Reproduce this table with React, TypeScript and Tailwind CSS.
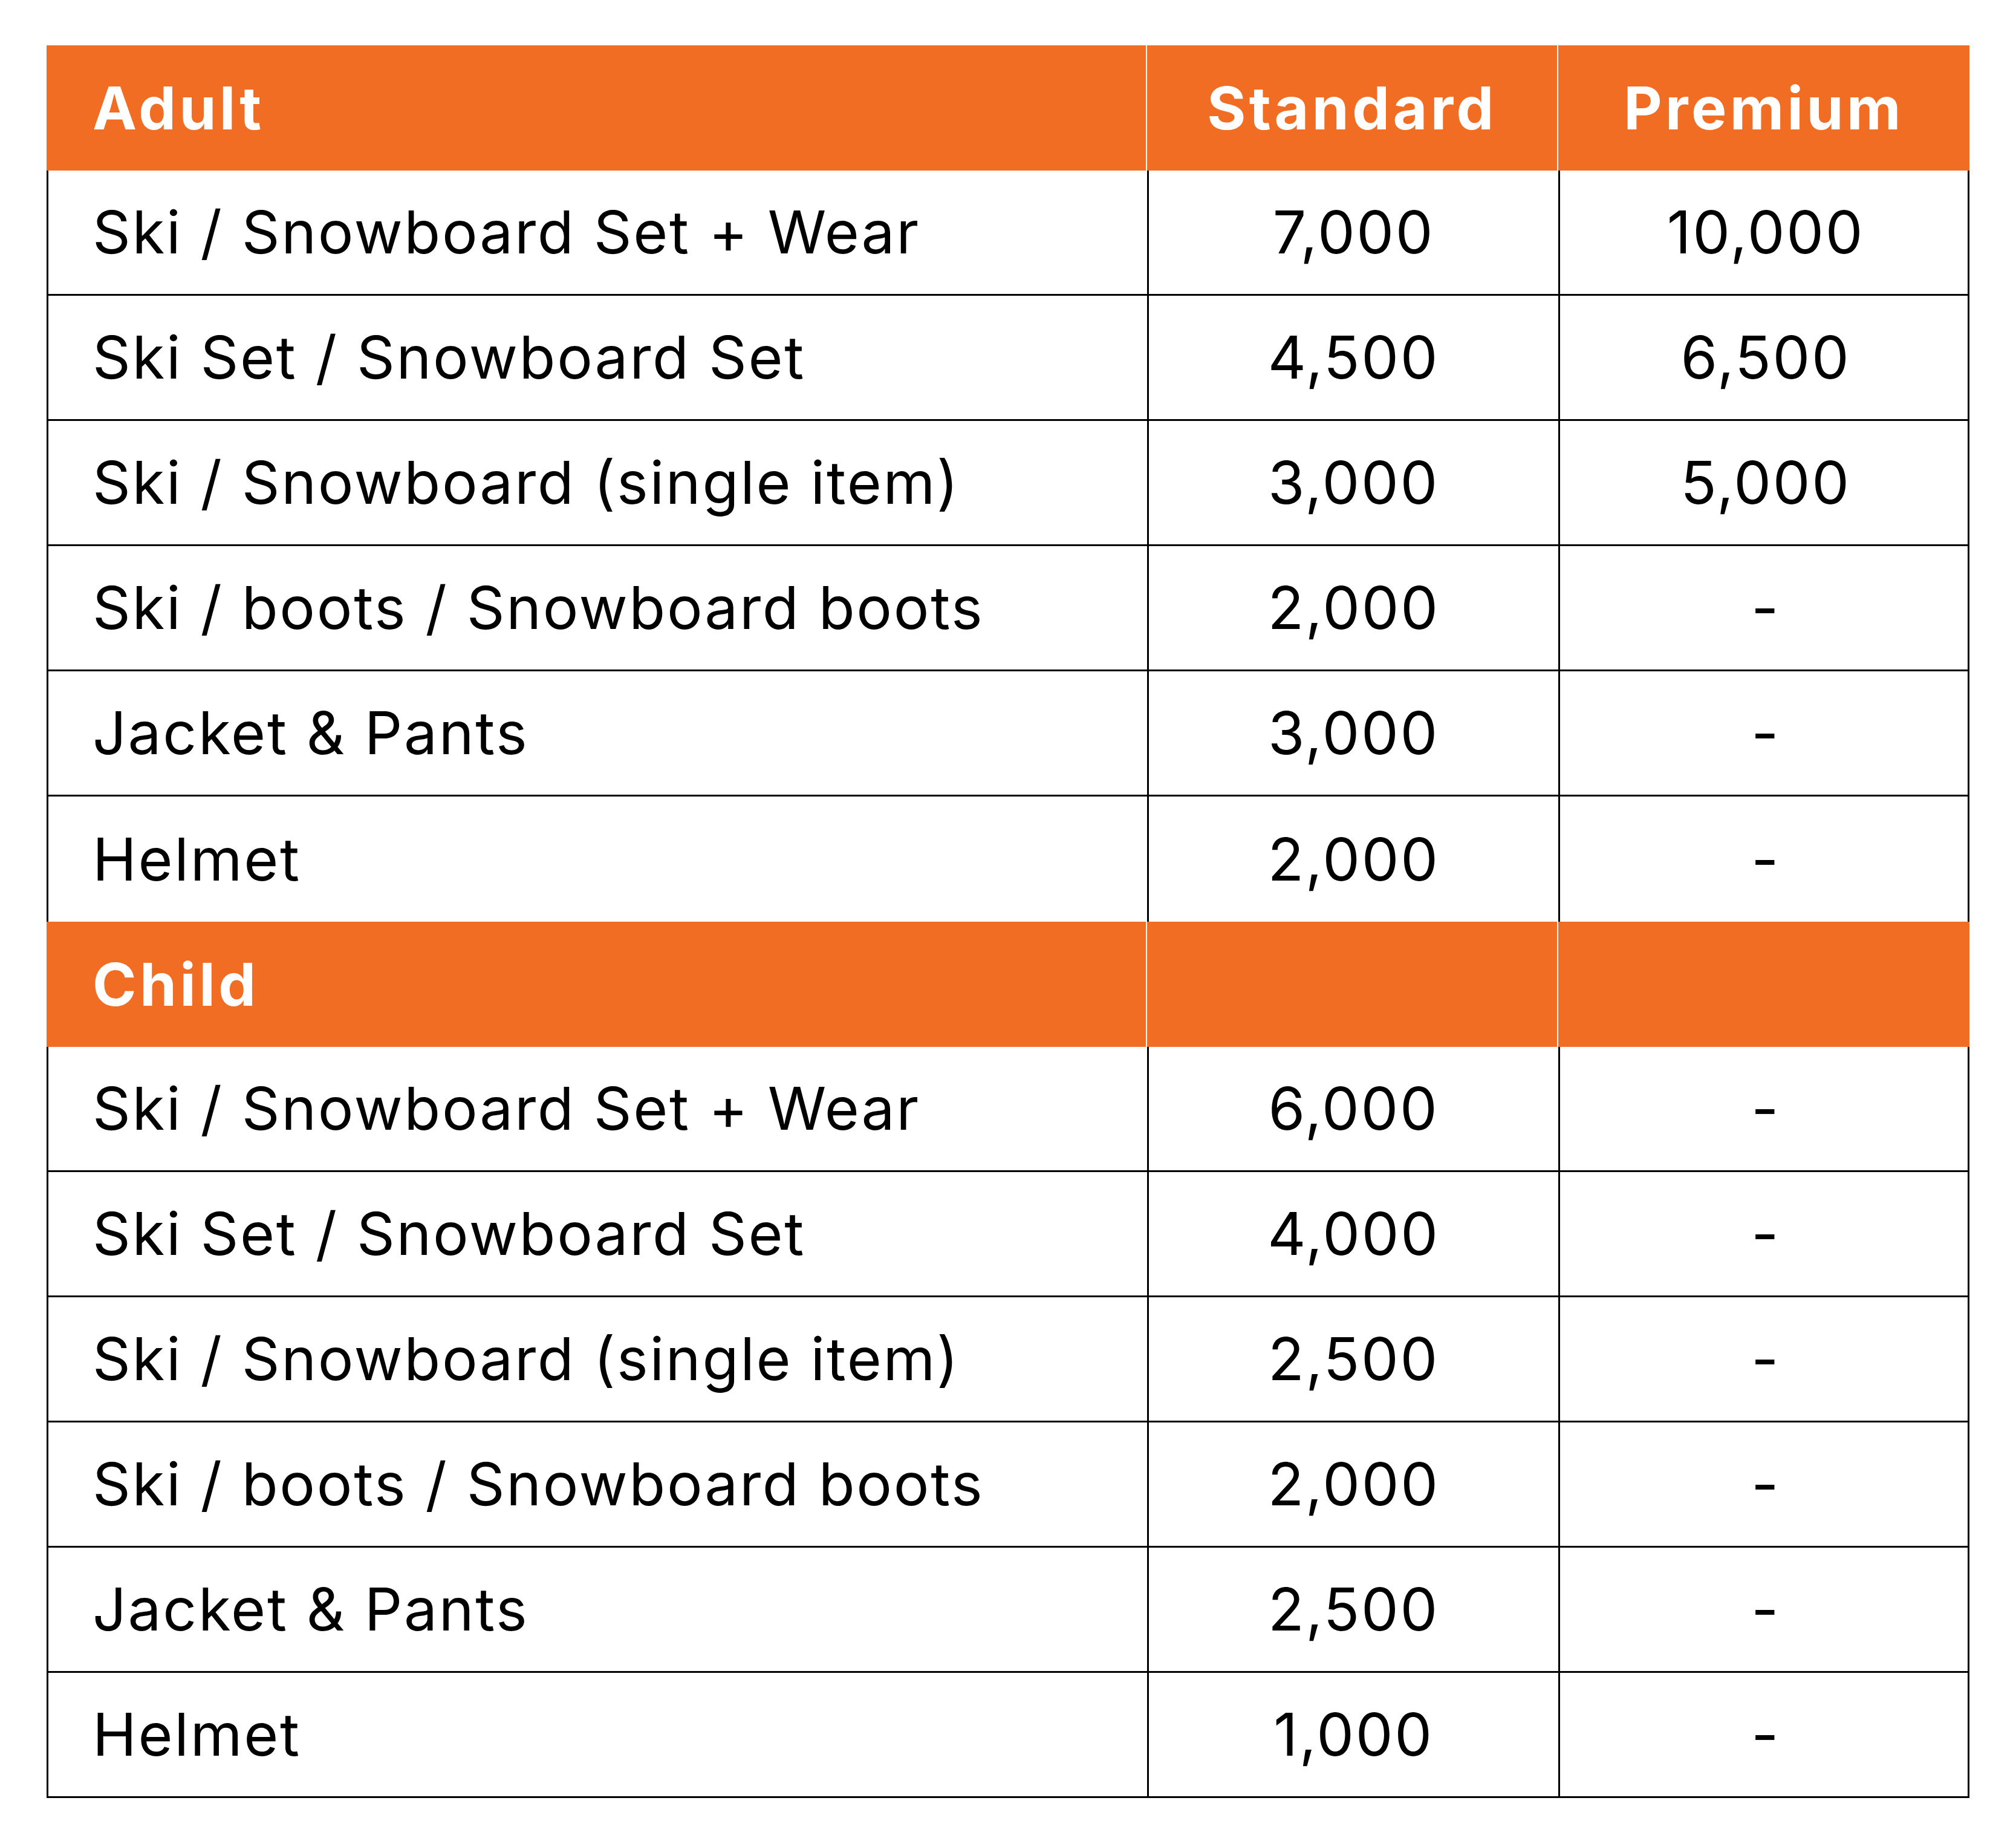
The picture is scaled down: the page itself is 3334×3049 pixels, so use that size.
const adult = [
  ["Ski / Snowboard Set + Wear", "7,000", "10,000"],
  ["Ski Set / Snowboard Set", "4,500", "6,500"],
  ["Ski / Snowboard (single item)", "3,000", "5,000"],
  ["Ski / boots / Snowboard boots", "2,000", "-"],
  ["Jacket & Pants", "3,000", "-"],
  ["Helmet", "2,000", "-"],
];

const child = [
  ["Ski / Snowboard Set + Wear", "6,000", "-"],
  ["Ski Set / Snowboard Set", "4,000", "-"],
  ["Ski / Snowboard (single item)", "2,500", "-"],
  ["Ski / boots / Snowboard boots", "2,000", "-"],
  ["Jacket & Pants", "2,500", "-"],
  ["Helmet", "1,000", "-"],
];

function HeadRow({ label, cols }: { label: string; cols: [string, string] }) {
  return (
    <div className="grid grid-cols-[1820px_680px_680px] h-[207px] bg-[#f06d23] text-white font-bold tracking-[0.055em]">
      <div className="flex items-center pl-[76px] border-r-2 border-white">{label}</div>
      <div className="flex items-center justify-center border-r-2 border-white">{cols[0]}</div>
      <div className="flex items-center justify-center">{cols[1]}</div>
    </div>
  );
}

function BodyRow({ row, last }: { row: string[]; last: boolean }) {
  return (
    <div
      className={`grid grid-cols-[1820px_680px_680px] h-[207px] border-x-[3px] border-black tracking-[0.027em] ${
        last ? "" : "border-b-[3px]"
      }`}
    >
      <div className="flex items-center pl-[73px] border-r-[3px] border-black">{row[0]}</div>
      <div className="flex items-center justify-center border-r-[3px] border-black">{row[1]}</div>
      <div className="flex items-center justify-center">{row[2]}</div>
    </div>
  );
}

export default function App() {
  return (
    <div
      className="w-[3334px] h-[3049px] bg-white pt-[75px] pl-[77px] text-black text-[98px] leading-none"
      style={{ fontFamily: "Inter, 'Noto Sans', sans-serif" }}
    >
      <div className="w-[3180px] flex flex-col">
        <HeadRow label="Adult" cols={["Standard", "Premium"]} />
        {adult.map((r, i) => (
          <BodyRow key={"a" + i} row={r} last={i === adult.length - 1} />
        ))}
        <HeadRow label="Child" cols={["", ""]} />
        {child.map((r, i) => (
          <BodyRow key={"c" + i} row={r} last={false} />
        ))}
      </div>
    </div>
  );
}
